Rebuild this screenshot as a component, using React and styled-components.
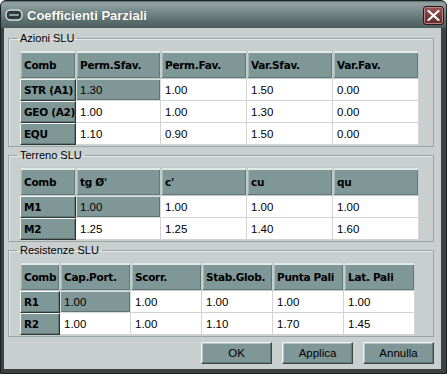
import React from 'react';
import styled, { createGlobalStyle } from 'styled-components';

const GlobalStyle = createGlobalStyle`
  body {
    margin: 0;
    background: #ffffff;
  }
`;

const groups = [
  {
    title: 'Azioni SLU',
    columns: '56px 85px 86px 86px 86px',
    head: ['Comb', 'Perm.Sfav.', 'Perm.Fav.', 'Var.Sfav.', 'Var.Fav.'],
    rows: [
      ['STR (A1)', '1.30', '1.00', '1.50', '0.00'],
      ['GEO (A2)', '1.00', '1.00', '1.30', '0.00'],
      ['EQU', '1.10', '0.90', '1.50', '0.00'],
    ],
  },
  {
    title: 'Terreno SLU',
    columns: '56px 85px 86px 86px 86px',
    head: ['Comb', 'tg Ø\'', 'c\'', 'cu', 'qu'],
    rows: [
      ['M1', '1.00', '1.00', '1.00', '1.00'],
      ['M2', '1.25', '1.25', '1.40', '1.60'],
    ],
  },
  {
    title: 'Resistenze SLU',
    columns: '40px 71px 71px 71px 71px 71px',
    head: ['Comb', 'Cap.Port.', 'Scorr.', 'Stab.Glob.', 'Punta Pali', 'Lat. Pali'],
    rows: [
      ['R1', '1.00', '1.00', '1.00', '1.00', '1.00'],
      ['R2', '1.00', '1.00', '1.10', '1.70', '1.45'],
    ],
  },
];

const App = () => (
  <>
    <GlobalStyle />
    <Window>
      <TitleBar>
        <svg width="18" height="12" viewBox="0 0 18 12">
          <rect x="1" y="1" width="16" height="10" rx="4.5" fill="#2f3a3a" stroke="#d8e0e0" strokeWidth="1.4" />
          <rect x="4" y="5" width="10" height="2" rx="1" fill="#8fa0a0" />
        </svg>
        <Title>Coefficienti Parziali</Title>
        <CloseButton>
          <svg width="13" height="11" viewBox="0 0 13 11">
            <path d="M1.5 1 L11.5 10 M11.5 1 L1.5 10" stroke="#ffffff" strokeWidth="2.2" strokeLinecap="round" />
          </svg>
        </CloseButton>
      </TitleBar>
      <Client>
        {groups.map((g) => (
          <Group key={g.title}>
            <Legend>{g.title}</Legend>
            <Table $columns={g.columns}>
              {g.head.map((h, i) => (
                <HeadCell key={'h' + i}>{h}</HeadCell>
              ))}
              {g.rows.map((row, r) =>
                row.map((v, c) =>
                  c === 0 ? (
                    <RowHead key={r + '-' + c}>{v}</RowHead>
                  ) : (
                    <Cell key={r + '-' + c} $selected={r === 0 && c === 1}>{v}</Cell>
                  )
                )
              )}
            </Table>
          </Group>
        ))}
        <ButtonRow>
          <Button>OK</Button>
          <Button>Applica</Button>
          <Button>Annulla</Button>
        </ButtonRow>
      </Client>
    </Window>
  </>
);

export default App;

const Window = styled.div`
  width: 447px;
  height: 374px;
  box-sizing: border-box;
  background: #3a4242;
  border: 1px solid #1b2020;
  border-radius: 6px 6px 0 0;
  display: flex;
  flex-direction: column;
  overflow: hidden;
`;

const TitleBar = styled.div`
  height: 27px;
  flex-shrink: 0;
  display: flex;
  align-items: center;
  gap: 4px;
  padding: 1px 2px 0 4px;
  box-sizing: border-box;
  background: linear-gradient(
    to bottom,
    #5a6a6a 0,
    #94a3a3 2px,
    #7b8e8e 9px,
    #607474 18px,
    #4c5c5c 27px
  );
`;

const Title = styled.span`
  font-family: 'Liberation Sans', Arial, sans-serif;
  font-weight: 700;
  font-size: 13px;
  color: #ffffff;
  flex: 1;
  text-shadow: 0 0 1px #3a4646;
`;

const CloseButton = styled.div`
  width: 21px;
  height: 19px;
  box-sizing: border-box;
  border-radius: 3px;
  border: 1px solid #2a1818;
  background: linear-gradient(to bottom, #9a5656, #743636 60%, #652c2c);
  box-shadow: inset 0 0 0 1px #b88484;
  display: flex;
  align-items: center;
  justify-content: center;
`;

const Client = styled.div`
  flex: 1;
  margin: 0 5px 4px 3px;
  padding: 4px 7px 0 4px;
  background: #c9cfcf;
  display: flex;
  flex-direction: column;
  gap: 2px;
`;

const Group = styled.fieldset`
  margin: 0;
  min-width: 0;
  border: 1px solid #9aa5a5;
  box-shadow: inset 1px 1px 0 #e3e8e8;
  padding: 5px 13px 1px 11px;
`;

const Legend = styled.legend`
  margin-left: -3px;
  padding: 0 3px;
  font-family: 'Liberation Sans', Arial, sans-serif;
  font-size: 11px;
  line-height: 13px;
  color: #000000;
`;

const Table = styled.div`
  display: grid;
  grid-template-columns: ${(p) => p.$columns};
  grid-auto-rows: 22px;
  grid-template-rows: 29px;
`;

const HeadCell = styled.div`
  box-sizing: border-box;
  height: 29px;
  display: flex;
  align-items: center;
  padding-left: 3px;
  background: #7f9797;
  border: 1px solid #c3cccc;
  box-shadow: inset 0 2px 0 #e2eaea, inset -1px -1px 0 #627676, inset 1px 0 0 #a7b6b6;
  font-family: 'DejaVu Sans', Verdana, sans-serif;
  font-weight: 700;
  font-size: 10.5px;
  letter-spacing: -0.3px;
  color: #000000;
  white-space: nowrap;
  overflow: hidden;
`;

const RowHead = styled.div`
  box-sizing: border-box;
  display: flex;
  align-items: center;
  padding-left: 3px;
  background: #7f9797;
  border: 1px solid;
  border-color: #f3f7f7 #2c3636 #2c3636 #f3f7f7;
  box-shadow: inset -1px -1px 0 #647878;
  font-family: 'DejaVu Sans', Verdana, sans-serif;
  font-weight: 700;
  font-size: 10.5px;
  letter-spacing: -0.3px;
  color: #000000;
  white-space: nowrap;
`;

const Cell = styled.div`
  box-sizing: border-box;
  display: flex;
  align-items: center;
  padding-left: ${(p) => (p.$selected ? '3px' : '4px')};
  background: ${(p) => (p.$selected ? '#7f9797' : '#ffffff')};
  border-right: 1px solid #d2d4d4;
  border-bottom: 1px solid #d2d4d4;
  ${(p) =>
    p.$selected &&
    `
    border: 1px solid #d6dede;
    box-shadow: inset -1px -1px 0 #5f7373;
  `}
  font-family: 'Liberation Sans', Arial, sans-serif;
  font-size: 11.5px;
  color: #000000;
`;

const ButtonRow = styled.div`
  display: flex;
  justify-content: flex-end;
  gap: 10px;
  margin-top: 3px;
`;

const Button = styled.button`
  width: 71px;
  height: 22px;
  box-sizing: border-box;
  padding: 0;
  background: #7f9797;
  border: 1px solid;
  border-color: #eef3f3 #3c4a4a #3c4a4a #eef3f3;
  box-shadow: inset -1px -1px 0 #627676, inset 1px 1px 0 #b6c4c4;
  font-family: 'Liberation Sans', Arial, sans-serif;
  font-size: 11.5px;
  color: #000000;
`;
